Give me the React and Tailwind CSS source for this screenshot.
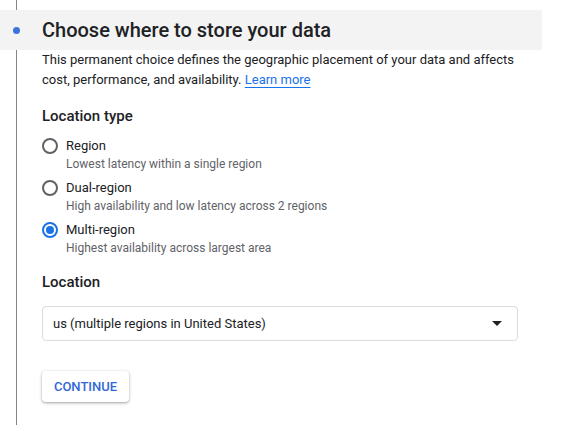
import React from "react";

const options = [
  { label: "Region", sub: "Lowest latency within a single region", checked: false },
  { label: "Dual-region", sub: "High availability and low latency across 2 regions", checked: false },
  { label: "Multi-region", sub: "Highest availability across largest area", checked: true },
];

function Radio({ checked }) {
  return (
    <div
      className={
        "w-4 h-4 rounded-full border-2 flex items-center justify-center shrink-0 " +
        (checked ? "border-[#1a73e8]" : "border-[#5f6368]")
      }
    >
      {checked && <div className="w-2 h-2 rounded-full bg-[#1a73e8]" />}
    </div>
  );
}

export default function App() {
  return (
    <div className="w-[569px] h-[431px] bg-white text-[#202124] font-['Roboto',sans-serif]">
      <div className="ml-4 w-px h-[10px] bg-[#80868b]" />
      <div className="w-[542px] h-10 bg-[#f3f3f3] flex items-center">
        <div className="w-[42px] flex">
          <div className="ml-[13px] w-[7px] h-[7px] rounded-full bg-[#3c73dc]" />
        </div>
        <h1 className="text-[20px] font-medium leading-none">Choose where to store your data</h1>
      </div>
      <div className="flex h-[375px]">
        <div className="w-[42px] shrink-0">
          <div className="ml-4 w-px h-full bg-[#80868b]" />
        </div>
        <div className="flex flex-col">
          <p className="text-[13px] leading-5 w-[480px]">
            This permanent choice defines the geographic placement of your data and affects cost, performance, and availability.{" "}
            <a className="text-[#1a73e8] underline underline-offset-[3px] decoration-[#1a73e8]">Learn more</a>
          </p>
          <h2 className="mt-[14px] text-[15px] font-medium leading-6">Location type</h2>
          <div className="mt-2 flex flex-col gap-[6px]">
            {options.map((o) => (
              <div key={o.label} className="flex">
                <div className="h-5 flex items-center">
                  <Radio checked={o.checked} />
                </div>
                <div className="ml-2 flex flex-col">
                  <span className="text-[13px] leading-5">{o.label}</span>
                  <span className="text-[12px] leading-4 text-[#5f6368]">{o.sub}</span>
                </div>
              </div>
            ))}
          </div>
          <h2 className="mt-[14px] text-[15px] font-medium leading-6">Location</h2>
          <div className="mt-3 w-[476px] h-[35px] border border-[#dadce0] rounded-[4px] flex items-center justify-between pl-[10px] pr-[15px]">
            <span className="text-[13px]">us (multiple regions in United States)</span>
            <svg width="10" height="5" viewBox="0 0 10 5">
              <path d="M0 0 L10 0 L5 5 Z" fill="#202124" />
            </svg>
          </div>
          <div className="mt-[30px]">
            <button className="h-[31px] w-[87px] rounded-[4px] bg-white text-[#3367d6] text-[13px] font-medium shadow-[0_1px_2px_rgba(60,64,67,0.3),0_1px_3px_1px_rgba(60,64,67,0.15)]">
              CONTINUE
            </button>
          </div>
        </div>
      </div>
    </div>
  );
}
